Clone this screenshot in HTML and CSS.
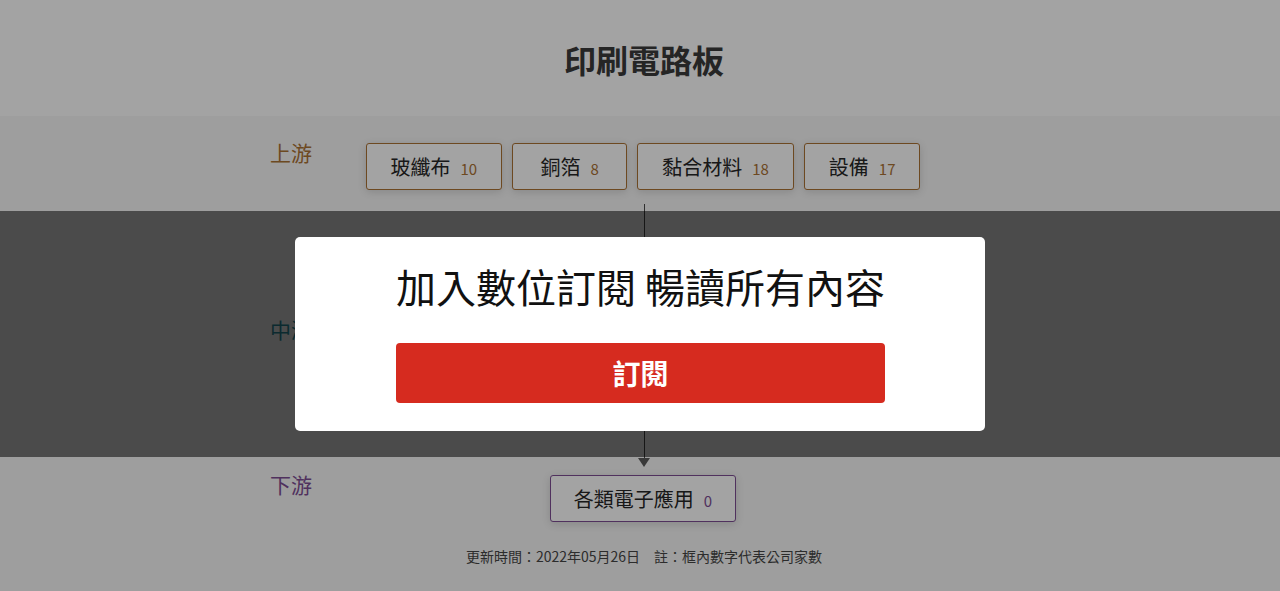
FILE: index.html
```html
<!DOCTYPE html>
<html lang="zh-Hant">
<head>
    <meta charset="utf-8">
    <meta name="viewport" content="width=device-width, initial-scale=1.0">
    <title>印刷電路板</title>
    <link rel="stylesheet" href="styles.css">
</head>
<body>
    <header class="page-head">
        <h1>印刷電路板</h1>
    </header>

    <section class="chain">
        <div class="tier up">
            <div class="tier-inner">
                <div class="tier-label">上游</div>
                <div class="nodes">
                    <a class="node" href="#">玻纖布<span class="count">10</span></a>
                    <a class="node" href="#">銅箔<span class="count">8</span></a>
                    <a class="node" href="#">黏合材料<span class="count">18</span></a>
                    <a class="node" href="#">設備<span class="count">17</span></a>
                </div>
            </div>
        </div>

        <div class="tier mid">
            <div class="tier-inner">
                <div class="tier-label">中游</div>
            </div>
            <div class="paywall">
                <div class="modal">
                    <h2>加入數位訂閱 暢讀所有內容</h2>
                    <a class="btn-subscribe" href="#">訂閱</a>
                </div>
            </div>
        </div>

        <div class="tier down">
            <div class="tier-inner">
                <div class="tier-label">下游</div>
                <div class="nodes">
                    <a class="node" href="#">各類電子應用<span class="count">0</span></a>
                </div>
            </div>
        </div>

        <p class="note">更新時間：2022年05月26日　註：框內數字代表公司家數</p>
    </section>

    <div class="dim"></div>
</body>
</html>
```

FILE: styles.css
```css
:root {
    --up-color: #ab7234;
    --mid-color: #2a8c9c;
    --down-color: #7d4e94;
    --text: #333333;
    --red: #d62b1f;
}

* {
    margin: 0;
    padding: 0;
    box-sizing: border-box;
}

body {
    font-family: "Noto Sans CJK TC", "Noto Sans", sans-serif;
    background: #ffffff;
    color: var(--text);
    height: 591px;
    overflow: hidden;
}

.page-head {
    text-align: center;
    padding: 38px 0 35px 8px;
}

.page-head h1 {
    font-size: 32px;
    line-height: 43px;
    font-weight: 700;
    color: #3a3a3a;
}

/* chain */
.chain {
    background: #f7f7f7;
    position: relative;
    padding-bottom: 40px;
}

.chain::before {
    content: '';
    position: absolute;
    left: 644px;
    top: 88px;
    width: 1px;
    height: 254px;
    background: #4a4a4a;
    z-index: 1;
}

.chain::after {
    content: '';
    position: absolute;
    left: 638px;
    top: 342px;
    border-left: 6.5px solid transparent;
    border-right: 6.5px solid transparent;
    border-top: 9px solid #5a5a5a;
    z-index: 1;
}

.tier {
    position: relative;
}

.tier-inner {
    width: 740px;
    margin: 0 auto;
    display: grid;
    grid-template-columns: 96px 554px;
    align-items: start;
}

.tier-label {
    font-size: 21px;
    line-height: 25px;
}

.up {
    height: 95px;
    padding-top: 27px;
}

.up .tier-label {
    color: var(--up-color);
    margin-top: -3px;
}

.mid {
    height: 246px;
    padding-top: 106px;
}

.mid .tier-label {
    color: var(--mid-color);
}

.down {
    padding-top: 18px;
}

.down .tier-label {
    color: var(--down-color);
    margin-top: -3px;
}

.nodes {
    display: flex;
    justify-content: center;
    gap: 10px;
}

.node {
    display: flex;
    justify-content: center;
    align-items: baseline;
    white-space: nowrap;
    flex-shrink: 0;
    min-width: 115px;
    height: 47px;
    padding: 0 24px;
    line-height: 45px;
    font-size: 20px;
    color: #262626;
    text-decoration: none;
    background: #ffffff;
    border: 1px solid var(--up-color);
    border-radius: 3px;
    box-shadow: 0 2px 8px rgba(0, 0, 0, 0.14);
    position: relative;
    z-index: 2;
}

.node .count {
    font-size: 15px;
    margin-left: 10px;
    color: var(--up-color);
}

.down .node {
    border-color: var(--down-color);
    padding: 0 23px;
}

.down .node .count {
    color: var(--down-color);
}

.note {
    text-align: center;
    font-size: 14px;
    line-height: 20px;
    margin-top: 24px;
    padding-left: 8px;
    color: #464646;
}

/* paywall */
.paywall {
    position: absolute;
    inset: 0;
    background: rgba(0, 0, 0, 0.52);
    display: flex;
    justify-content: center;
    align-items: center;
    z-index: 11;
}

.modal {
    width: 690px;
    background: #ffffff;
    border-radius: 5px;
    padding: 22px 100px 28px 101px;
    text-align: center;
}

.modal h2 {
    font-size: 40px;
    line-height: 54px;
    font-weight: 400;
    color: #111111;
    margin-bottom: 30px;
}

.btn-subscribe {
    display: block;
    height: 60px;
    line-height: 60px;
    background: var(--red);
    color: #ffffff;
    font-size: 28px;
    font-weight: 700;
    text-decoration: none;
    border-radius: 4px;
}

.dim {
    position: fixed;
    inset: 0;
    background: rgba(0, 0, 0, 0.36);
    z-index: 10;
}
```
